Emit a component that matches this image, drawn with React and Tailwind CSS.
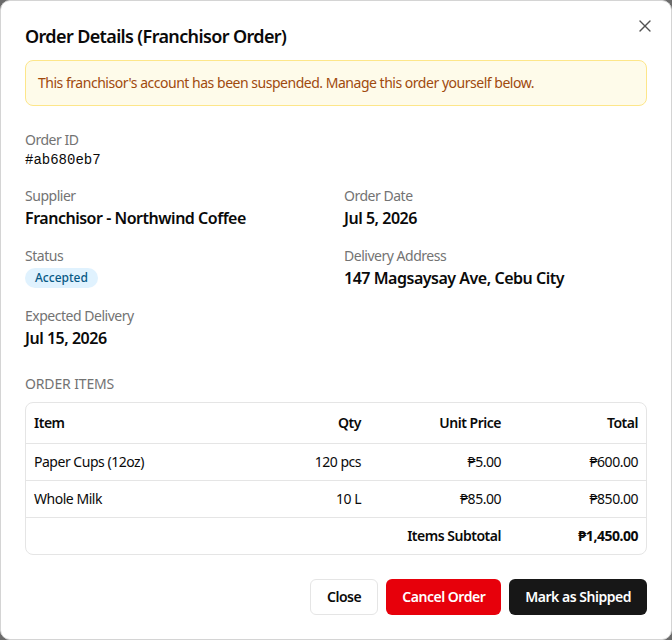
import { X } from "lucide-react"

const items = [
  { name: "Paper Cups (12oz)", qty: "120 pcs", price: "₱5.00", total: "₱600.00" },
  { name: "Whole Milk", qty: "10 L", price: "₱85.00", total: "₱850.00" },
]

function Field({ label, children }) {
  return (
    <div>
      <div className="text-sm leading-5 text-[#737373]">{label}</div>
      {children}
    </div>
  )
}

export default function App() {
  return (
    <div className="w-[672px] h-[640px] bg-[#6b6b6b] font-['Noto_Sans',sans-serif] tracking-[-0.03em] text-[#0a0a0a]">
      <div className="relative w-full h-full bg-white rounded-[10px] border border-[#d4d4d4] px-6 pt-[23px]">
        <button className="absolute top-[15px] right-[16px] text-[#525252]">
          <X size={20} strokeWidth={1.6} />
        </button>

        <h2 className="text-lg leading-6 font-semibold tracking-[-0.035em]">Order Details (Franchisor Order)</h2>

        {/* Suspended notice */}
        <div className="mt-3 rounded-lg border border-[#fde68a] bg-[#fefbea] px-3 py-3 text-sm leading-5 text-[#a04a0e]">
          This franchisor's account has been suspended. Manage this order yourself below.
        </div>

        <div className="mt-6 grid grid-cols-2 gap-x-4 gap-y-4">
          <Field label="Order ID">
            <div className="font-['Liberation_Mono',monospace] tracking-normal text-sm leading-5">#ab680eb7</div>
          </Field>
          <div />
          <Field label="Supplier">
            <div className="text-base leading-6 font-semibold">Franchisor - Northwind Coffee</div>
          </Field>
          <Field label="Order Date">
            <div className="text-base leading-6 font-semibold">Jul 5, 2026</div>
          </Field>
          <Field label="Status">
            <div className="h-6 flex items-center">
              <span className="rounded-full bg-[#e0f2fe] px-2.5 text-xs leading-5 font-medium tracking-normal text-[#075985]">
                Accepted
              </span>
            </div>
          </Field>
          <Field label="Delivery Address">
            <div className="text-base leading-6 font-semibold">147 Magsaysay Ave, Cebu City</div>
          </Field>
          <Field label="Expected Delivery">
            <div className="text-base leading-6 font-semibold">Jul 15, 2026</div>
          </Field>
        </div>

        {/* Items */}
        <div className="mt-6 text-sm leading-5 uppercase text-[#737373] tracking-[-0.01em]">Order Items</div>
        <div className="mt-2 rounded-lg border border-[#e5e5e5] text-sm">
          <div className="grid grid-cols-[1fr_140px_140px_137px] font-semibold border-b border-[#e5e5e5]">
            <div className="px-2 py-2.5 leading-5">Item</div>
            <div className="px-2 py-2.5 leading-5 text-right">Qty</div>
            <div className="px-2 py-2.5 leading-5 text-right">Unit Price</div>
            <div className="px-2 py-2.5 leading-5 text-right">Total</div>
          </div>
          {items.map((it) => (
            <div key={it.name} className="grid grid-cols-[1fr_140px_140px_137px] border-b border-[#e5e5e5]">
              <div className="px-2 py-2 leading-5">{it.name}</div>
              <div className="px-2 py-2 leading-5 text-right">{it.qty}</div>
              <div className="px-2 py-2 leading-5 text-right">{it.price}</div>
              <div className="px-2 py-2 leading-5 text-right">{it.total}</div>
            </div>
          ))}
          <div className="grid grid-cols-[1fr_140px_140px_137px]">
            <div />
            <div />
            <div className="px-2 py-2 leading-5 text-right font-semibold">Items Subtotal</div>
            <div className="px-2 py-2 leading-5 text-right font-bold">₱1,450.00</div>
          </div>
        </div>

        <div className="mt-6 flex justify-end gap-2 text-sm font-semibold">
          <button className="h-9 px-4 rounded-md border border-[#e5e5e5] bg-white">Close</button>
          <button className="h-9 px-4 rounded-md bg-[#e7000b] text-white">Cancel Order</button>
          <button className="h-9 px-4 rounded-md bg-[#171717] text-white">Mark as Shipped</button>
        </div>
      </div>
    </div>
  )
}
